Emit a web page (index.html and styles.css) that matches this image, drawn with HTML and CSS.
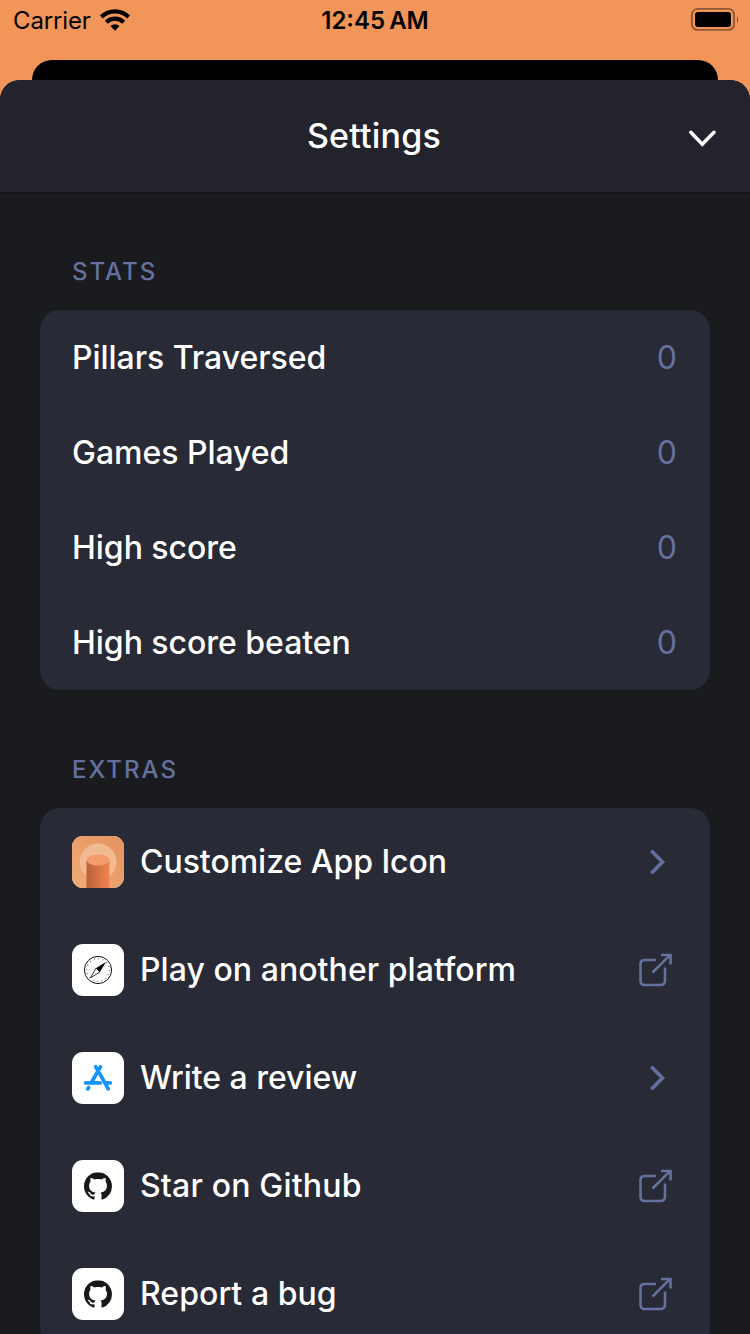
FILE: index.html
```html
<!DOCTYPE html>
<html lang="en">
<head>
<meta charset="utf-8">
<title>Settings</title>
<link rel="stylesheet" href="styles.css">
</head>
<body>
<svg class="defs" width="0" height="0" aria-hidden="true">
  <symbol id="chevron" viewBox="0 0 36 36"><path d="M13.3 6.800 24.500 18 13.3 29.200" fill="none" stroke="currentColor" stroke-width="3.600"/></symbol>
  <symbol id="external" viewBox="0 0 36 36"><path d="M18 8H6.500Q2.500 8 2.500 12V28.500Q2.500 33 6.500 33H22.500Q27 33 27 28.500V15.500M14.500 20.500 31.200 3.800M23 3H32.500V12.500" fill="none" stroke="currentColor" stroke-width="2.600"/></symbol>
  <symbol id="github" viewBox="0 0 16 16"><path fill="#191717" d="M8 0C3.580 0 0 3.580 0 8c0 3.540 2.290 6.530 5.470 7.590.4.070.55-.17.55-.38 0-.19-.01-.82-.01-1.490-2.010.37-2.530-.49-2.690-.94-.09-.23-.48-.94-.82-1.130-.28-.15-.68-.52-.01-.53.63-.01 1.080.58 1.230.82.720 1.210 1.870.87 2.330.66.070-.52.280-.87.510-1.070-1.780-.2-3.640-.89-3.640-3.950 0-.87.310-1.590.82-2.150-.08-.2-.36-1.020.08-2.120 0 0 .67-.21 2.200.82.640-.18 1.320-.27 2-.27s1.360.09 2 .27c1.530-1.040 2.200-.82 2.200-.82.440 1.100.16 1.920.08 2.120.51.560.82 1.270.82 2.150 0 3.070-1.870 3.750-3.650 3.950.290.25.54.73.54 1.480 0 1.070-.01 1.930-.01 2.200 0 .21.15.46.55.38A8.010 8.010 0 0 0 16 8c0-4.420-3.580-8-8-8z"/></symbol>
</svg>
<header class="status">
  <div class="carrier"><span>Carrier</span>
    <svg class="wifi" width="30" height="22" viewBox="0 0 30 22"><g fill="none" stroke="#000" stroke-width="4.200"><path d="M1.400 7.900C9 .4 21 .4 28.600 7.900"/><path d="M6.300 13.200C11.200 8.500 18.800 8.500 23.700 13.200"/></g><path d="M10.500 17Q15 13.400 19.500 17L15 21.700Z"/></svg>
  </div>
  <span class="clock">12:45 AM</span>
  <svg class="battery" width="50" height="24" viewBox="0 0 50 24"><rect x="1.900" y="1.900" width="42.200" height="21" rx="5.700" fill="none" stroke="#000" stroke-opacity=".4" stroke-width="1.900"/><rect x="5" y="5" width="36" height="15" rx="3"/><path d="M47 9Q49.400 12.400 47 16Z" fill-opacity=".48"/></svg>
</header>
<div class="behind"></div>
<main class="sheet">
  <div class="titlebar">
    <h1>Settings</h1>
    <svg class="close" width="32" height="24" viewBox="0 0 32 24"><path d="M4.800 6.300 16.300 18.200 28 6.300" fill="none" stroke="#fff" stroke-width="3.500" stroke-linecap="round"/></svg>
  </div>
  <section>
    <h2>STATS</h2>
    <div class="card stats">
      <div class="row"><span>Pillars Traversed</span><b>0</b></div>
      <div class="row"><span>Games Played</span><b>0</b></div>
      <div class="row"><span>High score</span><b>0</b></div>
      <div class="row"><span>High score beaten</span><b>0</b></div>
    </div>
  </section>
  <section class="extras-section">
    <h2>EXTRAS</h2>
    <div class="card extras">
      <div class="row">
        <svg class="tile app" viewBox="0 0 52 52"><defs><linearGradient id="bg" x1="1" y1="0" x2="0" y2="1"><stop stop-color="#e5925f"/><stop offset="1" stop-color="#f1ad75"/></linearGradient><linearGradient id="side"><stop stop-color="#b9623b"/><stop offset="1" stop-color="#f18350"/></linearGradient></defs><path fill="url(#bg)" d="M0 0h52v52H0z"/><circle cx="26" cy="26" r="18.500" fill="#f2ba91"/><path fill="url(#side)" d="M14.500 24h23v28h-23z"/><ellipse cx="26" cy="24" rx="11.500" ry="5.500" fill="#f39d6d"/></svg>
        <span>Customize App Icon</span><svg class="action"><use href="#chevron"/></svg>
      </div>
      <div class="row">
        <svg class="tile" viewBox="0 0 52 52"><circle cx="26" cy="26" r="13.600" fill="none" stroke="#111" stroke-width="1"/><circle cx="26" cy="26" r="11.300" fill="none" stroke="#555" stroke-width="1.300" stroke-dasharray=".7 3.737"/><path d="M34 18 27.900 28 24.100 24Z" fill="#000"/><path d="M24.100 24 27.900 28 18.500 33.800Z" fill="#fff" stroke="#000" stroke-width=".8"/></svg>
        <span class="looser">Play on another platform</span><svg class="action"><use href="#external"/></svg>
      </div>
      <div class="row">
        <svg class="tile" viewBox="0 0 52 52"><g fill="none" stroke="#1594fb" stroke-width="3.700" stroke-linecap="round"><path d="M23.600 14.800 26 18.500M28.500 14.800 19.300 30.600M13.700 30.900H28.200M34 30.900H38.300M16.700 35.500 15.800 37M27.300 20.900 36.200 36.900"/></g></svg>
        <span>Write a review</span><svg class="action"><use href="#chevron"/></svg>
      </div>
      <div class="row">
        <svg class="tile" viewBox="0 0 52 52"><use href="#github" x="12" y="12.300" width="28" height="28"/></svg>
        <span class="loosest">Star on Github</span><svg class="action"><use href="#external"/></svg>
      </div>
      <div class="row">
        <svg class="tile" viewBox="0 0 52 52"><use href="#github" x="12" y="12.300" width="28" height="28"/></svg>
        <span class="looser">Report a bug</span><svg class="action"><use href="#external"/></svg>
      </div>
    </div>
  </section>
</main>
</body>
</html>
```

FILE: styles.css
```css
* { box-sizing: border-box; }
body {
  margin: 0;
  height: 1334px;
  overflow: hidden;
  background: #f29559;
  color: #fff;
  font-family: Inter, "Liberation Sans", sans-serif;
  display: flex;
  flex-direction: column;
}
svg { display: block; flex: none; }
.defs { position: absolute; }
.status {
  height: 60px;
  flex: none;
  padding: 0 10px 0 13px;
  display: grid;
  grid-template-columns: 1fr auto 1fr;
  align-items: start;
  color: #000;
  font-size: 24px;
  line-height: 42px;
}
.carrier { display: flex; gap: 9px; letter-spacing: -.15px; }
.wifi { margin-top: 9px; }
.clock { font-weight: 600; margin-right: 3px; word-spacing: -2px; }
.battery { justify-self: end; margin-top: 7px; }
.behind {
  height: 20px;
  flex: none;
  margin: 0 32px;
  background: #000;
  border-radius: 20px 20px 0 0;
}
.sheet {
  height: 1254px;
  overflow: hidden;
  background: #1a1b1f;
  border-radius: 20px 20px 0 0;
}
.titlebar {
  height: 113px;
  display: grid;
  grid-template-columns: 1fr auto 1fr;
  align-items: center;
  background: #23232d;
  border-bottom: 1px solid #141518;
}
h1 {
  grid-column: 2;
  margin: -1px 2px 0 0;
  font-size: 34px;
  font-weight: 500;
  letter-spacing: .2px;
}
.close { justify-self: end; margin: 3px 32px 0 0; }
section { padding: 63px 40px 0; }
.extras-section { padding-top: 64px; }
h2 {
  margin: 0 0 22px 32px;
  font-size: 24px;
  line-height: 32px;
  font-weight: 500;
  letter-spacing: 2px;
  color: #64719f;
}
.card {
  background: #282a35;
  border-radius: 20px;
  padding: 0 32px;
  font-size: 32px;
  font-weight: 500;
  letter-spacing: -.03px;
}
.row { display: flex; align-items: center; }
.row span { flex: 1; white-space: nowrap; }
.row .looser { letter-spacing: .05px; }
.row .loosest { letter-spacing: .18px; }
.stats .row { height: 95px; padding-right: 1px; }
.stats b { font-weight: 400; letter-spacing: 0; color: #64719f; }
.extras .row { height: 108px; }
.extras .row span { margin-top: -1px; }
.tile {
  width: 52px;
  height: 52px;
  margin-right: 16px;
  border-radius: 11px;
  background: #fff;
}
.action { width: 36px; height: 36px; margin-right: 4px; color: #64719f; }
```
